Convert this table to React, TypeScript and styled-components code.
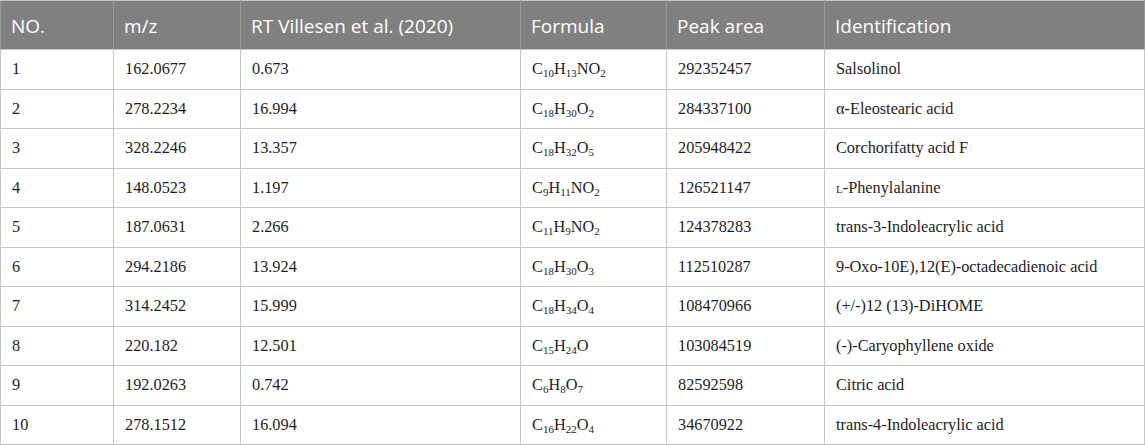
import React from "react";
import styled, { createGlobalStyle } from "styled-components";

const Global = createGlobalStyle`
  html, body { margin: 0; padding: 0; background: #ffffff; }
`;

const Table = styled.table`
  width: 1144px;
  table-layout: fixed;
  border-collapse: collapse;
  border: 1px solid #c6c6c6;
`;

const HeadCell = styled.th`
  background: #808080;
  color: #ffffff;
  font-family: "Open Sans", "Noto Sans", sans-serif;
  font-weight: 400;
  font-size: 19px;
  text-align: left;
  padding: 1px 10px 0;
  height: 47px;
  border: 1px solid #999999;
  border-top-color: #c6c6c6;
  border-bottom-color: #c6c6c6;
  white-space: nowrap;
`;

const Cell = styled.td`
  font-family: "Liberation Serif", "Times New Roman", serif;
  font-size: 16.3px;
  color: #1e1e1e;
  padding: 0 11px;
  height: 38.5px;
  border: 1px solid #c6c6c6;
  white-space: nowrap;
`;

const Sub = styled.sub`
  font-size: 11px;
  vertical-align: -3px;
  line-height: 0;
`;

const SmallCap = styled.span`
  font-variant: small-caps;
`;

type Part = string | { s: string };

const f = (...parts: Part[]) =>
  parts.map((p, i) =>
    typeof p === "string" ? <React.Fragment key={i}>{p}</React.Fragment> : <Sub key={i}>{p.s}</Sub>
  );

const rows: { no: string; mz: string; rt: string; formula: React.ReactNode; area: string; id: React.ReactNode }[] = [
  { no: "1", mz: "162.0677", rt: "0.673", formula: f("C", { s: "10" }, "H", { s: "13" }, "NO", { s: "2" }), area: "292352457", id: "Salsolinol" },
  { no: "2", mz: "278.2234", rt: "16.994", formula: f("C", { s: "18" }, "H", { s: "30" }, "O", { s: "2" }), area: "284337100", id: "α-Eleostearic acid" },
  { no: "3", mz: "328.2246", rt: "13.357", formula: f("C", { s: "18" }, "H", { s: "32" }, "O", { s: "5" }), area: "205948422", id: "Corchorifatty acid F" },
  { no: "4", mz: "148.0523", rt: "1.197", formula: f("C", { s: "9" }, "H", { s: "11" }, "NO", { s: "2" }), area: "126521147", id: <><SmallCap>l</SmallCap>-Phenylalanine</> },
  { no: "5", mz: "187.0631", rt: "2.266", formula: f("C", { s: "11" }, "H", { s: "9" }, "NO", { s: "2" }), area: "124378283", id: "trans-3-Indoleacrylic acid" },
  { no: "6", mz: "294.2186", rt: "13.924", formula: f("C", { s: "18" }, "H", { s: "30" }, "O", { s: "3" }), area: "112510287", id: "9-Oxo-10E),12(E)-octadecadienoic acid" },
  { no: "7", mz: "314.2452", rt: "15.999", formula: f("C", { s: "18" }, "H", { s: "34" }, "O", { s: "4" }), area: "108470966", id: "(+/-)12 (13)-DiHOME" },
  { no: "8", mz: "220.182", rt: "12.501", formula: f("C", { s: "15" }, "H", { s: "24" }, "O"), area: "103084519", id: "(-)-Caryophyllene oxide" },
  { no: "9", mz: "192.0263", rt: "0.742", formula: f("C", { s: "6" }, "H", { s: "8" }, "O", { s: "7" }), area: "82592598", id: "Citric acid" },
  { no: "10", mz: "278.1512", rt: "16.094", formula: f("C", { s: "16" }, "H", { s: "22" }, "O", { s: "4" }), area: "34670922", id: "trans-4-Indoleacrylic acid" },
];

const widths = [113, 127, 280, 146, 158, 320];

export default function App() {
  return (
    <>
      <Global />
      <Table>
        <colgroup>
          {widths.map((w, i) => (
            <col key={i} style={{ width: w }} />
          ))}
        </colgroup>
        <thead>
          <tr>
            <HeadCell>NO.</HeadCell>
            <HeadCell>m/z</HeadCell>
            <HeadCell>RT Villesen et al. (2020)</HeadCell>
            <HeadCell>Formula</HeadCell>
            <HeadCell>Peak area</HeadCell>
            <HeadCell>Identification</HeadCell>
          </tr>
        </thead>
        <tbody>
          {rows.map((r) => (
            <tr key={r.no}>
              <Cell>{r.no}</Cell>
              <Cell>{r.mz}</Cell>
              <Cell>{r.rt}</Cell>
              <Cell>{r.formula}</Cell>
              <Cell>{r.area}</Cell>
              <Cell>{r.id}</Cell>
            </tr>
          ))}
        </tbody>
      </Table>
    </>
  );
}
